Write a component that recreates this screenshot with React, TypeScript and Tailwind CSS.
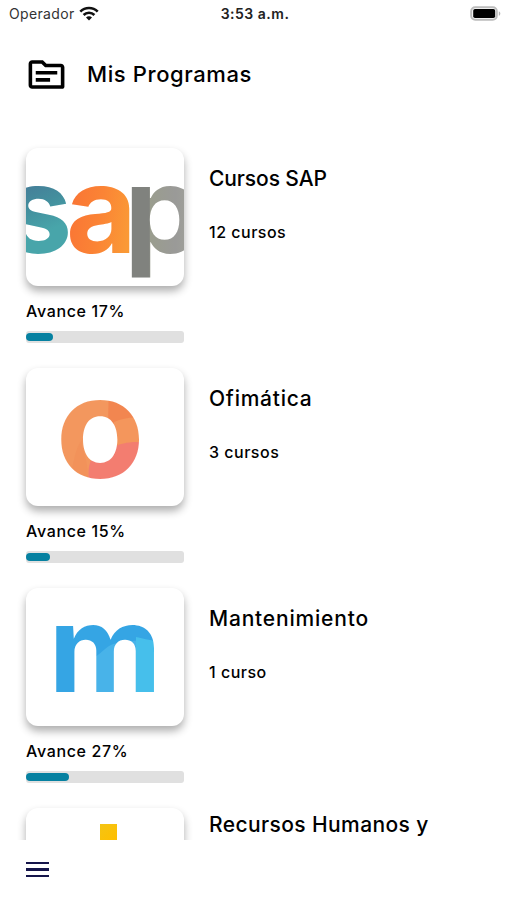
import React from "react";
import { MdOutlineTopic } from "react-icons/md";

type Program = {
  id: string;
  title: string;
  courses: string;
  progress: number;
  titleClass: string;
  logo: React.ReactNode;
};

const letterFont = { fontFamily: '"Inter", "Liberation Sans", sans-serif', fontWeight: 700 };

function SapLogo() {
  return (
    <svg viewBox="0 0 158 138" className="block h-full w-full">
      <defs>
        <linearGradient id="sapS" x1="0" y1="0" x2="0.2" y2="1">
          <stop offset="0.3" stopColor="#467596" />
          <stop offset="0.55" stopColor="#438e9d" />
          <stop offset="0.75" stopColor="#48a5aa" />
        </linearGradient>
        <linearGradient id="sapA" x1="0" y1="0" x2="1" y2="0.3">
          <stop offset="0" stopColor="#f96f35" />
          <stop offset="0.6" stopColor="#fb8435" />
          <stop offset="1" stopColor="#fa9a36" />
        </linearGradient>
        <linearGradient id="sapP" x1="0" y1="0" x2="1" y2="0">
          <stop offset="0.32" stopColor="#80827e" />
          <stop offset="0.33" stopColor="#9a9d8e" />
          <stop offset="0.65" stopColor="#9a9a98" />
          <stop offset="1" stopColor="#a4a79a" />
        </linearGradient>
      </defs>
      <text transform="translate(-22 105)" fontSize="122" fill="url(#sapS)" style={letterFont}>s</text>
      <text transform="translate(40 105)" fontSize="122" fill="url(#sapA)" style={letterFont}>a</text>
      <text transform="translate(98 105) scale(1.03 0.99)" fontSize="122" fill="url(#sapP)" style={letterFont}>p</text>
    </svg>
  );
}

function OfficeLogo() {
  return (
    <svg viewBox="0 0 158 138" className="block h-full w-full">
      <defs>
        <clipPath id="officeO">
          <text transform="translate(29.5 108.5) scale(1.04 1)" fontSize="140" style={letterFont}>o</text>
        </clipPath>
      </defs>
      <g clipPath="url(#officeO)">
        <rect width="158" height="138" fill="#f3975e" />
        <path d="M82 20h60v40c-20-8-35-4-55 0-8-4-3-20-5-40z" fill="#f28650" />
        <path d="M88 54c14-6 26-6 50 0v24H88z" fill="#f4965c" />
        <path d="M56 72c-2 10 7 14 6 45H42c6-20 6-36 14-45z" fill="#f2925a" />
        <path d="M64 120c-4-20 0-32 10-37 12 0 16-10 40-9h24v50z" fill="#f37d70" />
      </g>
    </svg>
  );
}

function MaintenanceLogo() {
  return (
    <svg viewBox="0 0 158 138" className="block h-full w-full">
      <defs>
        <clipPath id="maintM">
          <text transform="translate(22.5 104) scale(1.025 1)" fontSize="121" style={letterFont}>m</text>
        </clipPath>
      </defs>
      <g clipPath="url(#maintM)">
        <rect width="158" height="138" fill="#35a5e4" />
        <path d="M67 70c10-5 14-14 25-15 14-1 22-6 45 2v60H67z" fill="#48b3e9" />
        <path d="M110 49c10 2 15 4 25 4v60h-25z" fill="#46bfeb" />
      </g>
    </svg>
  );
}

function HumanResourcesLogo() {
  return (
    <svg viewBox="0 0 158 138" className="block h-full w-full">
      <defs>
        <linearGradient id="hrDot" x1="0" y1="0" x2="1" y2="1">
          <stop offset="0" stopColor="#f4c414" />
          <stop offset="1" stopColor="#ffbf00" />
        </linearGradient>
      </defs>
      <rect x="74" y="16" width="17" height="16" fill="url(#hrDot)" />
    </svg>
  );
}

const programs: Program[] = [
  { id: "sap", title: "Cursos SAP", courses: "12 cursos", progress: 17, titleClass: "tracking-[-0.1px]", logo: <SapLogo /> },
  { id: "ofi", title: "Ofimática", courses: "3 cursos", progress: 15, titleClass: "tracking-[0.75px]", logo: <OfficeLogo /> },
  { id: "man", title: "Mantenimiento", courses: "1 curso", progress: 27, titleClass: "tracking-[0.8px]", logo: <MaintenanceLogo /> },
  { id: "rh", title: "Recursos Humanos y", courses: "", progress: 0, titleClass: "-mt-3.5 tracking-[0.4px]", logo: <HumanResourcesLogo /> },
];

function StatusBar() {
  return (
    <div className="grid h-7 shrink-0 grid-cols-3 items-center pb-0.5 pl-[9px] pr-[6px] text-[14px]">
      <div className="flex items-center gap-1 text-[#333]">
        <span className="tracking-[0.35px]">Operador</span>
        <svg viewBox="0 0 20 15" className="h-[15px] w-5" fill="none" stroke="#111" strokeWidth="2.6">
          <path d="M1.3 5.6a12.3 12.3 0 0 1 17.4 0" />
          <path d="M4.6 9a7.6 7.6 0 0 1 10.8 0" />
          <path d="M10 14.5l-3-3a4.2 4.2 0 0 1 6 0z" fill="#111" stroke="none" />
        </svg>
      </div>
      <span className="text-center font-semibold tracking-[0.5px] text-[#222]">3:53 a.m.</span>
      <svg viewBox="0 0 31 15" className="h-[15px] w-[31px] justify-self-end">
        <rect x="1.2" y="1.2" width="25.6" height="12.6" rx="4" fill="#fff" stroke="#bcbcbc" strokeWidth="2" />
        <rect x="3.2" y="3" width="22" height="9" rx="1.8" fill="#000" />
        <path d="M28.8 5.2c2 .8 2 3.8 0 4.6z" fill="#b5b5b5" />
      </svg>
    </div>
  );
}

function ProgramRow({ program }: { program: Program }) {
  return (
    <div className="flex h-[220px] shrink-0 gap-[25px]">
      <div className="w-[158px]">
        <div className="h-[138px] rounded-xl bg-white shadow-[0_5px_9px_rgba(0,0,0,0.32)]">
          <div className="h-full overflow-hidden rounded-xl">{program.logo}</div>
        </div>
        <div className="mt-[13px] h-6 text-[16px] leading-6 tracking-[0.65px]">
          Avance {program.progress}%
        </div>
        <div className="mt-2 flex h-3 items-center rounded-[3px] bg-[#e0e0e0]">
          <div className="h-2 rounded-full bg-[#0681a1]" style={{ width: `${program.progress}%` }} />
        </div>
      </div>
      <div className="flex flex-col">
        <div className={`flex h-[60px] items-center pt-px text-[21px] ${program.titleClass}`}>{program.title}</div>
        <div className="mt-3 text-[16px] leading-6 tracking-[0.5px]">{program.courses}</div>
      </div>
    </div>
  );
}

function App() {
  return (
    <div className="flex h-[900px] w-[507px] flex-col overflow-hidden bg-white font-['Inter','Liberation_Sans',sans-serif]">
      <StatusBar />

      <header className="flex h-[93px] shrink-0 items-center gap-[19px] pl-[25px]">
        <MdOutlineTopic size={43} className="text-black" />
        <h1 className="text-[22px] font-medium tracking-[0.6px] text-black">Mis Programas</h1>
      </header>

      <main className="flex h-[719px] shrink-0 flex-col overflow-hidden pl-[26px] pt-[27px] font-medium text-black">
        {programs.map((program) => (
          <ProgramRow key={program.id} program={program} />
        ))}
      </main>

      <footer className="flex h-[60px] items-center pb-px pl-[26px]">
        <button aria-label="Menú" className="flex w-[23px] flex-col gap-1">
          <span className="h-[2.5px] bg-[#15154b]" />
          <span className="h-[2.5px] bg-[#15154b]" />
          <span className="h-[2.5px] bg-[#15154b]" />
        </button>
      </footer>
    </div>
  );
}

export default App;
